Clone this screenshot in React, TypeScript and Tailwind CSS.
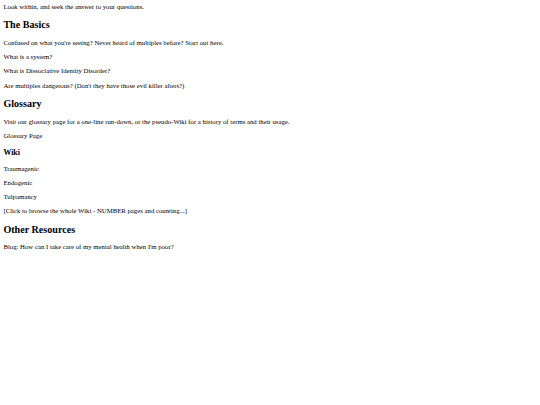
export default function App() {
  const p = "my-[6.6px] leading-[7.7px]";
  const h2 = "text-[10.1px] leading-[11.6px] font-bold my-[8.4px]";
  return (
    <div
      className="min-h-[405px] bg-white text-black text-[6.75px] px-[3.4px] pt-[3px]"
      style={{ fontFamily: '"Liberation Serif", "Times New Roman", serif' }}
    >
      <p className="mt-0 mb-[6.6px] leading-[7.7px]">Look within, and seek the answer to your questions.</p>
      <h2 className="text-[10.1px] leading-[11.6px] font-bold mt-[8.2px] mb-[8.2px]">The Basics</h2>
      <p className={p}>Confused on what you're seeing? Never heard of multiples before? Start out here.</p>
      <p className={p}>What is a system?</p>
      <p className={p}>What is Dissociative Identity Disorder?</p>
      <p className={p}>Are multiples dangerous? (Don't they have those evil killer alters?)</p>
      <h2 className={h2}>Glossary</h2>
      <p className={p}>Visit our glossary page for a one-line run-down, or the pseudo-Wiki for a history of terms and their usage.</p>
      <p className={p}>Glossary Page</p>
      <h3 className="text-[7.9px] leading-[9.1px] font-bold my-[7.9px]">Wiki</h3>
      <p className={p}>Traumagenic</p>
      <p className={p}>Endogenic</p>
      <p className={p}>Tulpamancy</p>
      <p className={p}>[Click to browse the whole Wiki - NUMBER pages and counting...]</p>
      <h2 className={h2}>Other Resources</h2>
      <p className={p}>Blog: How can I take care of my mental health when I'm poor?</p>
    </div>
  );
}
